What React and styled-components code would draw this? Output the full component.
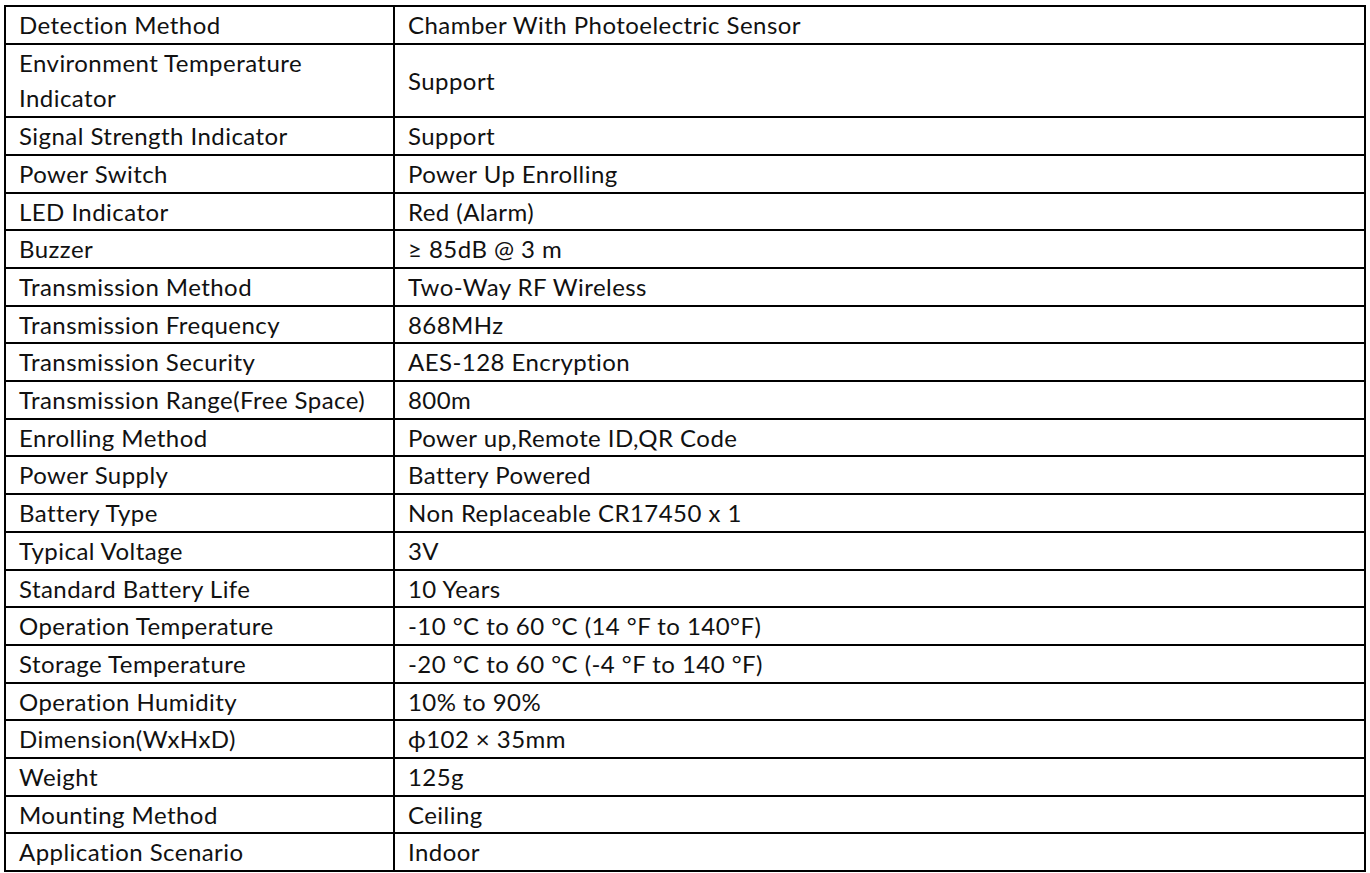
import React from "react";
import styled, { createGlobalStyle } from "styled-components";

const rows = [
  ["Detection Method", "Chamber With Photoelectric Sensor"],
  ["Environment Temperature Indicator", "Support"],
  ["Signal Strength Indicator", "Support"],
  ["Power Switch", "Power Up Enrolling"],
  ["LED Indicator", "Red (Alarm)"],
  ["Buzzer", "≥ 85dB @ 3 m"],
  ["Transmission Method", "Two-Way RF Wireless"],
  ["Transmission Frequency", "868MHz"],
  ["Transmission Security", "AES-128 Encryption"],
  ["Transmission Range(Free Space)", "800m"],
  ["Enrolling Method", "Power up,Remote ID,QR Code"],
  ["Power Supply", "Battery Powered"],
  ["Battery Type", "Non Replaceable CR17450 x 1"],
  ["Typical Voltage", "3V"],
  ["Standard Battery Life", "10 Years"],
  ["Operation Temperature", "-10 °C to 60 °C (14 °F to 140°F)"],
  ["Storage Temperature", "-20 °C to 60 °C (-4 °F to 140 °F)"],
  ["Operation Humidity", "10% to 90%"],
  ["Dimension(WxHxD)", "ϕ102 × 35mm"],
  ["Weight", "125g"],
  ["Mounting Method", "Ceiling"],
  ["Application Scenario", "Indoor"],
];

const GlobalStyle = createGlobalStyle`
  body {
    margin: 0;
    background: #fff;
    font-family: Lato, "Liberation Sans", sans-serif;
    color: #111;
  }
`;

const Page = styled.div`
  padding: 5px 4px 0 4px;
`;

const Table = styled.table`
  width: 1362px;
  border-collapse: collapse;
  border: 2px solid #000;
  table-layout: fixed;
`;

const Cell = styled.td`
  border: 2px solid #000;
  padding: 0 10px 0 13px;
  font-size: 24px;
  line-height: 35.7px;
  vertical-align: middle;
  width: ${(p) => (p.$label ? "364px" : "auto")};
  letter-spacing: 0.45px;
`;

export default function App() {
  return (
    <Page>
      <GlobalStyle />
      <Table>
        <tbody>
          {rows.map(([label, value]) => (
            <tr key={label}>
              <Cell $label>{label}</Cell>
              <Cell>{value}</Cell>
            </tr>
          ))}
        </tbody>
      </Table>
    </Page>
  );
}
